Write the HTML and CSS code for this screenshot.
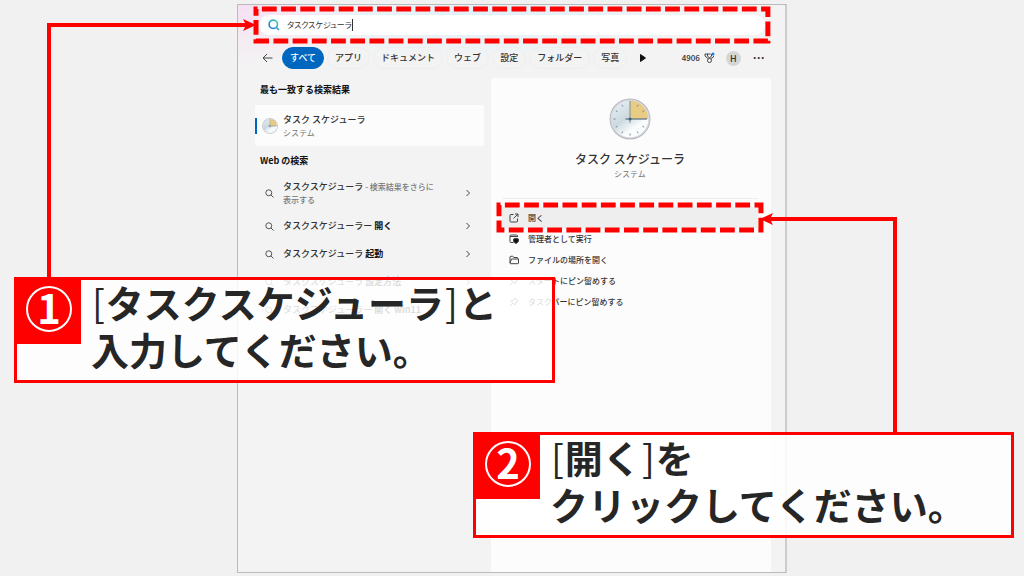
FILE: index.html
```html
<!DOCTYPE html>
<html lang="ja">
<head>
    <meta charset="UTF-8">
    <title>タスク スケジューラ</title>
    <link rel="stylesheet" href="styles.css">
</head>
<body>
<svg class="defs" width="0" height="0" aria-hidden="true">
    <symbol id="search" viewBox="0 0 10 10"><circle cx="4.2" cy="4.2" r="3.3"/><path d="M6.7 6.7 9.4 9.4"/></symbol>
    <symbol id="chevron" viewBox="0 0 6 8"><path d="M1.5 1 4.5 4 1.5 7"/></symbol>
    <symbol id="pin" viewBox="0 0 10 10"><path d="M6 1 9 4 8 4.7 6.8 5.2 5.8 8 2 4.2 4.8 3.2 5.3 2zM3.7 6.3 1 9"/></symbol>
    <symbol id="clock" viewBox="0 0 42 42">
        <circle cx="21" cy="21" r="20.5" fill="#b4b6be"/>
        <circle cx="21" cy="21" r="19.6" fill="#d9d9e0"/>
        <circle cx="21" cy="21" r="18.3" fill="url(#face)"/>
        <path d="M21 21V2.7A18.3 18.3 0 0 1 39.3 21z" fill="#e9cc83"/>
        <g stroke="#71869a" stroke-width="1">
            <path d="M21 35.5v2M4.5 21h2M12.8 6.8l1 1.7M6.8 12.8l1.7 1M6.8 29.2l1.7-1M12.8 35.2l1-1.7M29.2 35.2l-1-1.7M35.2 29.2l-1.7-1M35.2 12.8l-1.7 1M29.2 6.8l-1 1.7"/>
        </g>
        <path d="M21 3v22" stroke="#7890a0" stroke-width="1"/>
        <path d="M16.5 21H38" stroke="#587080" stroke-width="1.2"/>
        <circle cx="21" cy="21" r="1.5" fill="#466078"/>
    </symbol>
    <linearGradient id="face" x1="0" y1="0" x2="0.7" y2="1">
        <stop offset="0" stop-color="#e9f4f8"/>
        <stop offset="0.5" stop-color="#ccd9df"/>
        <stop offset="0.8" stop-color="#fafdfd"/>
    </linearGradient>
    <linearGradient id="lens" x1="1" y1="0" x2="0" y2="1">
        <stop offset="0" stop-color="#4fcf9a"/>
        <stop offset="0.5" stop-color="#279fd0"/>
        <stop offset="1" stop-color="#1769d2"/>
    </linearGradient>
</svg>

<div class="stage">
    <main class="window">
        <div class="search">
            <label class="search-box">
                <svg width="12" height="12" viewBox="0 0 12 12" fill="none" stroke="url(#lens)" stroke-width="1.6" aria-hidden="true"><circle cx="5.3" cy="5.3" r="4.2"/><path d="M8.3 8.3 11 11"/></svg>
                <span class="field">
                    <input type="text" value="タスクスケジューラ" size="9" aria-label="検索">
                    <span class="caret"></span>
                </span>
            </label>
            <svg class="highlight" aria-hidden="true"><rect width="100%" height="100%"/></svg>
        </div>

        <nav class="tabs">
            <button class="back" aria-label="戻る"><svg width="11" height="10" viewBox="0 0 11 10"><path d="M10.5 5H1M5 1 1 5l4 4"/></svg></button>
            <button class="tab active">すべて</button>
            <button class="tab">アプリ</button>
            <button class="tab">ドキュメント</button>
            <button class="tab">ウェブ</button>
            <button class="tab">設定</button>
            <button class="tab">フォルダー</button>
            <button class="tab">写真</button>
            <button class="next" aria-label="次へ"><svg width="6" height="8" viewBox="0 0 6 8"><path d="M.5.5 5.5 4 .5 7.5z" fill="#111" stroke="#111"/></svg></button>
            <span class="points">4906
                <svg width="11" height="12" viewBox="0 0 11 12"><path d="M1 2h5.5M1 2v2l3 2.5M3.5 2v2l2 2 2-2V2M9.5 4v1L7 6.5"/><circle cx="5.5" cy="8.5" r="2"/><circle cx="9" cy="2" r="1.5" fill="#1680e0" stroke="none"/></svg>
            </span>
            <button class="avatar">H</button>
            <button class="more" aria-label="その他">···</button>
        </nav>

        <div class="columns">
            <section class="results">
                <h2>最も一致する検索結果</h2>
                <a class="best" href="#">
                    <svg width="16" height="16"><use href="#clock"/></svg>
                    <span class="best-text"><b>タスク スケジューラ</b><small>システム</small></span>
                </a>
                <h2 class="web">Web の検索</h2>
                <a class="item tall" href="#">
                    <svg class="icon" width="9" height="9"><use href="#search"/></svg>
                    <span>タスクスケジューラ <small>- 検索結果をさらに<br>表示する</small></span>
                    <svg class="icon" width="6" height="8"><use href="#chevron"/></svg>
                </a>
                <a class="item" href="#">
                    <svg class="icon" width="9" height="9"><use href="#search"/></svg>
                    <span>タスクスケジューラー <b>開く</b></span>
                    <svg class="icon" width="6" height="8"><use href="#chevron"/></svg>
                </a>
                <a class="item" href="#">
                    <svg class="icon" width="9" height="9"><use href="#search"/></svg>
                    <span>タスクスケジューラ <b>起動</b></span>
                    <svg class="icon" width="6" height="8"><use href="#chevron"/></svg>
                </a>
                <a class="item" href="#">
                    <svg class="icon" width="9" height="9"><use href="#search"/></svg>
                    <span>タスクスケジューラ <b>設定方法</b></span>
                    <svg class="icon" width="6" height="8"><use href="#chevron"/></svg>
                </a>
                <a class="item" href="#">
                    <svg class="icon" width="9" height="9"><use href="#search"/></svg>
                    <span>タスクスケジューラー <b>開く win11</b></span>
                    <svg class="icon" width="6" height="8"><use href="#chevron"/></svg>
                </a>
            </section>

            <section class="detail">
                <div class="app">
                    <svg width="42" height="42"><use href="#clock"/></svg>
                    <h1>タスク スケジューラ</h1>
                    <small>システム</small>
                </div>
                <div class="actions">
                    <button class="action open">
                        <svg class="icon" width="10" height="10" viewBox="0 0 10 10"><path d="M4.5 1.5H2a1 1 0 0 0-1 1V8a1 1 0 0 0 1 1h5.5a1 1 0 0 0 1-1V5.5M6 1h3v3M9 1 4.5 5.5"/></svg>
                        開く
                        <svg class="highlight" aria-hidden="true"><rect width="100%" height="100%"/></svg>
                    </button>
                    <button class="action">
                        <svg class="icon" width="10" height="10" viewBox="0 0 10 10"><path d="M4.5 8.5H2a1 1 0 0 1-1-1V2a1 1 0 0 1 1-1h5.5a1 1 0 0 1 1 1v1M1 2.5h7.5"/><path d="M7 4.2 9.5 5v2Q9 8.8 7 9.5 5 8.8 4.5 7V5z" fill="#111"/></svg>
                        管理者として実行
                    </button>
                    <button class="action">
                        <svg class="icon" width="10" height="10" viewBox="0 0 10 10"><path d="M1 8V2q0-.7.7-.7h2L5 2.500h3q.7 0 .7.700V4M1 8l1.500-4H9.500v4q0 .7-.7.700H1.500Q1 8.700 1 8z"/></svg>
                        ファイルの場所を開く
                    </button>
                    <button class="action">
                        <svg class="icon" width="10" height="10"><use href="#pin"/></svg>
                        スタートにピン留めする
                    </button>
                    <button class="action">
                        <svg class="icon" width="10" height="10"><use href="#pin"/></svg>
                        タスクバーにピン留めする
                    </button>
                </div>
            </section>
        </div>
    </main>

    <div class="connector first"><svg width="13" height="12" viewBox="0 0 13 12"><path d="M0 0 13 6 0 12 3 6z"/></svg></div>
    <div class="connector second"><svg width="13" height="12" viewBox="0 0 13 12"><path d="M13 0 0 6l13 6-3-6z"/></svg></div>

    <div class="callout one">
        <div class="badge"><span>1</span></div>
        <p><i>[</i>タスクスケジューラ<i>]</i>と<br>入力してください。</p>
    </div>
    <div class="callout two">
        <div class="badge"><span>2</span></div>
        <p><i>[</i>開く<i>]</i>を<br>クリックしてください。</p>
    </div>
</div>
</body>
</html>
```
FILE: styles.css
```css
* {
    box-sizing: border-box;
}

body {
    margin: 0;
    background: #f1f1f1;
    color: #333;
    font-family: "Noto Sans CJK JP", sans-serif;
    font-size: 9px;
    line-height: 14px;
}

button {
    margin: 0;
    padding: 0;
    border: 0;
    background: none;
    color: inherit;
    font: inherit;
    white-space: nowrap;
    cursor: pointer;
}

a {
    color: inherit;
    text-decoration: none;
}

svg {
    flex: none;
    fill: none;
}

h1, h2, p {
    margin: 0;
}

small {
    color: #777;
    font-size: 8px;
    line-height: 12px;
}

.defs {
    position: absolute;
}

.stage {
    position: relative;
    display: flex;
    justify-content: center;
    min-height: 100vh;
    padding: 4px 0 3px;
    overflow: hidden;
}

.window {
    display: flex;
    flex-direction: column;
    width: 53.7%;
    border: 1px solid #bbb;
    border-right: 2px solid #ccc;
    background:
        radial-gradient(ellipse 120px 60px at 0 0, #f6e0f4, transparent),
        radial-gradient(ellipse 220px 44px at 45% 10px, #dff2fb, transparent),
        #f3f3f3;
}

/* search bar */
.search {
    position: relative;
    margin: 10px 20px 0 21px;
}

.search-box {
    display: flex;
    align-items: center;
    gap: 7px;
    height: 20px;
    padding: 0 9px;
    border-radius: 10px;
    background: #fff;
}

.field {
    display: flex;
    align-items: center;
}

.field input {
    field-sizing: content;
    padding: 0;
    border: 0;
    outline: 0;
    background: none;
    color: #333;
    font: 8px/14px "Noto Sans CJK JP", sans-serif;
    font-feature-settings: "palt";
}

.caret {
    width: 1px;
    height: 12px;
    background: #333;
}

/* dashed frame */
.highlight {
    position: absolute;
    top: -6px;
    left: -3px;
    width: calc(100% + 6px);
    height: calc(100% + 12px);
    overflow: visible;
    stroke: #f00;
    stroke-width: 5px;
    stroke-dasharray: 14.8 4.4;
    stroke-dashoffset: 13.3px;
}

/* filter tabs */
.tabs {
    display: flex;
    align-items: center;
    gap: 3px;
    margin: 12px 20px 0 24px;
    font-weight: 500;
}

.tabs svg {
    display: block;
    stroke: #444;
}

.tab {
    height: 22px;
    padding: 0 7px;
    border: 1px solid #eee;
    border-radius: 11px;
}

.tab.active {
    margin-left: 6px;
    border-color: #0067c0;
    background: #0067c0;
    color: #fff;
}

.next {
    margin-left: 10px;
}

.points {
    display: flex;
    align-items: center;
    gap: 4px;
    margin-left: auto;
    font-size: 8px;
}

.avatar {
    width: 15px;
    height: 15px;
    margin-left: 8px;
    border-radius: 50%;
    background: #d6d6d6;
    line-height: 15px;
}

.more {
    margin-left: 9px;
    font-family: "Liberation Sans", sans-serif;
    font-size: 12px;
    font-weight: bold;
}

/* two columns */
.columns {
    display: grid;
    grid-template-columns: 229fr 280fr;
    flex: 1;
    gap: 7px;
    margin-top: 9px;
    padding: 0 14px 0 17px;
}

.results {
    padding-top: 5px;
}

.results h2 {
    padding-left: 5px;
    color: #111;
    font-size: 9px;
    font-weight: 700;
}

.results .web {
    margin: 8px 0 6px;
}

.best {
    display: flex;
    align-items: center;
    gap: 5px;
    height: 41px;
    margin-top: 8px;
    padding-right: 5px;
    border-radius: 2px;
    background: #fcfcfc;
}

.best::before {
    content: "";
    width: 2px;
    height: 16px;
    background: #0067c0;
}

.best-text {
    display: flex;
    flex-direction: column;
}

.best b {
    font-weight: 500;
}

.icon {
    stroke: #444;
}

.item {
    display: flex;
    align-items: center;
    gap: 9px;
    height: 28px;
    padding: 0 13px 0 10px;
    font-weight: 500;
}

.item.tall {
    height: 38px;
    line-height: 13px;
}

.item span {
    flex: 1;
}

.item b {
    color: #111;
    font-weight: 700;
}

.detail {
    padding: 20px 13px 0 11px;
    border-radius: 3px 3px 0 0;
    background: #fcfcfc;
}

.app {
    display: flex;
    flex-direction: column;
    align-items: center;
    padding-bottom: 18px;
    border-bottom: 1px solid #eee;
}

.app h1 {
    margin: 10px 0 0;
    font-size: 12px;
    font-weight: 500;
    line-height: 18px;
}

.actions {
    display: flex;
    flex-direction: column;
    margin-top: 8px;
    font-size: 8px;
    font-weight: 500;
}

.action {
    display: flex;
    align-items: center;
    gap: 9px;
    height: 21px;
    padding-left: 7px;
}

.open {
    position: relative;
    background: #eee;
}

.open .highlight {
    top: -2px;
    left: -3px;
    width: calc(100% + 6px);
    height: calc(100% + 4px);
}

/* step callouts */
.callout {
    position: absolute;
    display: flex;
    gap: 10px;
    width: 52.8%;
    min-width: 541px;
    border: 3px solid #f00;
    background: rgba(255, 255, 255, 0.85);
}

.one {
    top: 277px;
    left: 14px;
}

.two {
    top: 432px;
    right: 10px;
}

.badge {
    display: flex;
    align-items: center;
    justify-content: center;
    width: 64px;
    height: 64px;
    padding-bottom: 6px;
    background: #f00;
}

.badge span {
    width: 46px;
    height: 46px;
    border: 2px solid #fff;
    border-radius: 50%;
    color: #fff;
    font-size: 40px;
    font-weight: 700;
    line-height: 38px;
    text-align: center;
}

.callout p {
    padding-bottom: 6px;
    margin-top: -2px;
    margin-bottom: 2px;
    color: #262626;
    font-size: 38px;
    font-weight: 700;
    line-height: 47px;
    white-space: nowrap;
}

.callout i {
    padding: 0 1px;
    font-style: normal;
    font-weight: 400;
}

.connector {
    position: absolute;
    border-top: 4px solid #f00;
}

.connector svg {
    position: absolute;
    top: -8px;
    fill: #f00;
}

.first {
    top: 23px;
    left: 47px;
    width: 20%;
    height: 254px;
    border-left: 4px solid #f00;
}

.first svg {
    right: -4px;
}

.second {
    top: 217px;
    right: 127px;
    width: 13%;
    height: 215px;
    border-right: 4px solid #f00;
}

.second svg {
    left: -4px;
}
```
